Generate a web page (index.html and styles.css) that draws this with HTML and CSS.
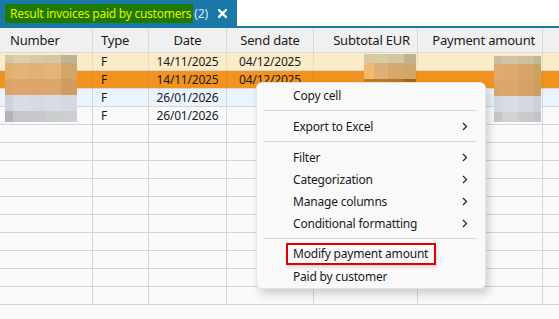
FILE: index.html
```html
<!DOCTYPE html>
<html>
<head>
<meta charset="utf-8">
<link rel="stylesheet" href="styles.css">
</head>
<body>
<div class="tabbar">
  <div class="tab">
    <span class="tab-title">Result invoices paid by customers</span>
    <span class="tab-count">(2)</span>
    <svg class="tab-close" width="9" height="9" viewBox="0 0 9 9"><path d="M1 1L8 8M8 1L1 8" stroke="#fff" stroke-width="2.4" stroke-linecap="square"/></svg>
  </div>
</div>
<div class="grid-wrap">
  <div class="grid">
    <div class="row head">
      <div class="c c1">Number</div><div class="c c2">Type</div><div class="c c3 center">Date</div><div class="c c4 center">Send date</div><div class="c c5 right">Subtotal EUR</div><div class="c c6 right">Payment amount</div><div class="c c7"></div>
    </div>
    <div class="row r-yellow">
      <div class="c c1"></div><div class="c c2">F</div><div class="c c3 center">14/11/2025</div><div class="c c4 center">04/12/2025</div><div class="c c5"></div><div class="c c6"></div><div class="c c7"></div>
    </div>
    <div class="row r-orange">
      <div class="c c1"></div><div class="c c2">F</div><div class="c c3 center">14/11/2025</div><div class="c c4 center">04/12/2025</div><div class="c c5"></div><div class="c c6"></div><div class="c c7"></div>
    </div>
    <div class="row r-blue">
      <div class="c c1"></div><div class="c c2">F</div><div class="c c3 center">26/01/2026</div><div class="c c4"></div><div class="c c5"></div><div class="c c6"></div><div class="c c7"></div>
    </div>
    <div class="row">
      <div class="c c1"></div><div class="c c2">F</div><div class="c c3 center">26/01/2026</div><div class="c c4"></div><div class="c c5"></div><div class="c c6"></div><div class="c c7"></div>
    </div>
    <div class="row"><div class="c c1"></div><div class="c c2"></div><div class="c c3"></div><div class="c c4"></div><div class="c c5"></div><div class="c c6"></div><div class="c c7"></div></div>
    <div class="row"><div class="c c1"></div><div class="c c2"></div><div class="c c3"></div><div class="c c4"></div><div class="c c5"></div><div class="c c6"></div><div class="c c7"></div></div>
    <div class="row"><div class="c c1"></div><div class="c c2"></div><div class="c c3"></div><div class="c c4"></div><div class="c c5"></div><div class="c c6"></div><div class="c c7"></div></div>
    <div class="row"><div class="c c1"></div><div class="c c2"></div><div class="c c3"></div><div class="c c4"></div><div class="c c5"></div><div class="c c6"></div><div class="c c7"></div></div>
    <div class="row"><div class="c c1"></div><div class="c c2"></div><div class="c c3"></div><div class="c c4"></div><div class="c c5"></div><div class="c c6"></div><div class="c c7"></div></div>
    <div class="row"><div class="c c1"></div><div class="c c2"></div><div class="c c3"></div><div class="c c4"></div><div class="c c5"></div><div class="c c6"></div><div class="c c7"></div></div>
    <div class="row"><div class="c c1"></div><div class="c c2"></div><div class="c c3"></div><div class="c c4"></div><div class="c c5"></div><div class="c c6"></div><div class="c c7"></div></div>
    <div class="row"><div class="c c1"></div><div class="c c2"></div><div class="c c3"></div><div class="c c4"></div><div class="c c5"></div><div class="c c6"></div><div class="c c7"></div></div>
    <div class="row"><div class="c c1"></div><div class="c c2"></div><div class="c c3"></div><div class="c c4"></div><div class="c c5"></div><div class="c c6"></div><div class="c c7"></div></div>
    <div class="row"><div class="c c1"></div><div class="c c2"></div><div class="c c3"></div><div class="c c4"></div><div class="c c5"></div><div class="c c6"></div><div class="c c7"></div></div>
  </div>

  <div class="mosaic mz-num">
    <span></span><span></span><span></span><span></span><span></span>
    <span></span><span></span><span></span><span></span><span></span>
    <span></span><span></span><span></span><span></span><span></span>
    <span></span><span></span><span></span><span></span><span></span>
    <span></span><span></span><span></span><span></span><span></span>
  </div>
  <div class="mosaic mz-sub">
    <span></span><span></span><span></span><span></span>
    <span></span><span></span><span></span><span></span>
    <span></span><span></span><span></span><span></span>
  </div>
  <div class="mosaic mz-pay">
    <span></span><span></span><span></span><span></span>
    <span></span><span></span><span></span><span></span>
    <span></span><span></span><span></span><span></span>
    <span></span><span></span><span></span><span></span>
    <span></span><span></span><span></span><span></span>
  </div>

  <div class="menu">
    <div class="item">Copy cell</div>
    <div class="sep"></div>
    <div class="item sub">Export to Excel<svg class="chev" width="6" height="9" viewBox="0 0 6 9"><path d="M1 1l3.5 3.5L1 8" fill="none" stroke="#222" stroke-width="1.2"/></svg></div>
    <div class="sep"></div>
    <div class="item sub">Filter<svg class="chev" width="6" height="9" viewBox="0 0 6 9"><path d="M1 1l3.5 3.5L1 8" fill="none" stroke="#222" stroke-width="1.2"/></svg></div>
    <div class="item sub">Categorization<svg class="chev" width="6" height="9" viewBox="0 0 6 9"><path d="M1 1l3.5 3.5L1 8" fill="none" stroke="#222" stroke-width="1.2"/></svg></div>
    <div class="item sub">Manage columns<svg class="chev" width="6" height="9" viewBox="0 0 6 9"><path d="M1 1l3.5 3.5L1 8" fill="none" stroke="#222" stroke-width="1.2"/></svg></div>
    <div class="item sub">Conditional formatting<svg class="chev" width="6" height="9" viewBox="0 0 6 9"><path d="M1 1l3.5 3.5L1 8" fill="none" stroke="#222" stroke-width="1.2"/></svg></div>
    <div class="sep"></div>
    <div class="item"><span class="highlight">Modify payment amount</span></div>
    <div class="item">Paid by customer</div>
  </div>
</div>
</body>
</html>
```

FILE: styles.css
```css
* { box-sizing: border-box; }
html, body {
  margin: 0;
  padding: 0;
  width: 559px;
  height: 319px;
  overflow: hidden;
  background: #f9fafb;
  font-family: "Noto Sans", "Open Sans", sans-serif;
  color: #1a1a1a;
}
.tabbar {
  height: 28px;
  background: #ffffff;
  border-bottom: 2px solid #1a78a8;
  display: flex;
}
.tab {
  width: 237px;
  height: 26px;
  background: #1a78a8;
  display: flex;
  align-items: center;
  padding-left: 5px;
}
.tab-title {
  background: #1e7b00;
  color: #e4f000;
  font-size: 12px;
  height: 19px;
  line-height: 19px;
  padding: 0 2px 0 5px;
  white-space: nowrap;
  letter-spacing: -0.25px;
}
.tab-count {
  color: #dbe8f5;
  font-size: 12px;
  margin-left: 1px;
  letter-spacing: -0.2px;
}
.tab-close {
  margin-left: 10px;
}
.grid-wrap {
  position: relative;
}
.grid {
  display: flex;
  flex-direction: column;
}
.row {
  display: flex;
  height: 18px;
  background: #f9fafb;
}
.c {
  height: 100%;
  border-right: 1px solid #d6d6d6;
  border-bottom: 1px solid #d6d6d6;
  font-size: 12px;
  line-height: 17px;
  white-space: nowrap;
  overflow: hidden;
  letter-spacing: -0.2px;
}
.c1 { width: 93px; padding-left: 10px; }
.c2 { width: 56px; padding-left: 8px; }
.c3 { width: 78px; }
.c4 { width: 87px; }
.c5 { width: 104px; padding-right: 7px; }
.c6 { width: 125px; padding-right: 7px; }
.c7 { flex: 1; border-right: none; }
.center { text-align: center; }
.right { text-align: right; }
.row.head {
  height: 25px;
  background: #f0f0f0;
}
.row.head .c {
  font-size: 13px;
  line-height: 24px;
  color: #1a1a1a;
  border-color: #dadada;
}
.r-yellow { background: #fbecc9; }
.r-yellow .c { border-right-color: #e6dcc4; }
.r-orange { background: #f3931f; }
.r-orange .c { border-right-color: #e08a20; }
.r-blue { background: #eaf4fe; }

.mosaic {
  position: absolute;
  display: grid;
}
.mosaic span { display: block; }
.mz-num {
  left: 5px;
  top: 27px;
  grid-template-columns: 8px 16px 16px 16px 16px;
  grid-template-rows: 8px 16px 16px 16px 11px;
}
.mz-num span:nth-child(1) { background: #d4c6a8; }
.mz-num span:nth-child(2) { background: #dccfae; }
.mz-num span:nth-child(3) { background: #d8c9a8; }
.mz-num span:nth-child(4) { background: #d3c5a6; }
.mz-num span:nth-child(5) { background: #bcb49a; }
.mz-num span:nth-child(6) { background: #e1b06f; }
.mz-num span:nth-child(7) { background: #e2b476; }
.mz-num span:nth-child(8) { background: #e2b274; }
.mz-num span:nth-child(9) { background: #e3b578; }
.mz-num span:nth-child(10) { background: #d0a66b; }
.mz-num span:nth-child(11) { background: #dba468; }
.mz-num span:nth-child(12) { background: #dea66a; }
.mz-num span:nth-child(13) { background: #dca56a; }
.mz-num span:nth-child(14) { background: #dda76b; }
.mz-num span:nth-child(15) { background: #cf9d62; }
.mz-num span:nth-child(16) { background: #ced2da; }
.mz-num span:nth-child(17) { background: #d8dce4; }
.mz-num span:nth-child(18) { background: #d6dae2; }
.mz-num span:nth-child(19) { background: #d8dce3; }
.mz-num span:nth-child(20) { background: #d4d8e0; }
.mz-num span:nth-child(21) { background: #b5b3b8; }
.mz-num span:nth-child(22) { background: #c8c6cb; }
.mz-num span:nth-child(23) { background: #c9c7cc; }
.mz-num span:nth-child(24) { background: #c9cfcf; }
.mz-num span:nth-child(25) { background: #cfcdd2; }

.mz-sub {
  left: 364px;
  top: 26px;
  grid-template-columns: 10px 14px 16px 12px;
  grid-template-rows: 9px 16px 16px;
}
.mz-sub span:nth-child(1) { background: #dcc8a4; }
.mz-sub span:nth-child(2) { background: #d6cca6; }
.mz-sub span:nth-child(3) { background: #d3c7a3; }
.mz-sub span:nth-child(4) { background: #bcb394; }
.mz-sub span:nth-child(5) { background: #f0b870; }
.mz-sub span:nth-child(6) { background: #dcb078; }
.mz-sub span:nth-child(7) { background: #d4a86e; }
.mz-sub span:nth-child(8) { background: #d0a86c; }
.mz-sub span:nth-child(9) { background: #c87a22; }
.mz-sub span:nth-child(10) { background: #c47820; }
.mz-sub span:nth-child(11) { background: #c07420; }
.mz-sub span:nth-child(12) { background: #a86414; }

.mz-pay {
  left: 494px;
  top: 28px;
  grid-template-columns: 8px 16px 16px 7px;
  grid-template-rows: 8px 16px 16px 16px 10px;
}
.mz-pay span:nth-child(1) { background: #c8bca0; }
.mz-pay span:nth-child(2) { background: #d0c4a4; }
.mz-pay span:nth-child(3) { background: #ccc0a0; }
.mz-pay span:nth-child(4) { background: #c0b898; }
.mz-pay span:nth-child(5) { background: #ddab6d; }
.mz-pay span:nth-child(6) { background: #dcaa6c; }
.mz-pay span:nth-child(7) { background: #d6a468; }
.mz-pay span:nth-child(8) { background: #cca060; }
.mz-pay span:nth-child(9) { background: #d9a66a; }
.mz-pay span:nth-child(10) { background: #dba86b; }
.mz-pay span:nth-child(11) { background: #d5a367; }
.mz-pay span:nth-child(12) { background: #caa062; }
.mz-pay span:nth-child(13) { background: #d4d8e0; }
.mz-pay span:nth-child(14) { background: #d8dce4; }
.mz-pay span:nth-child(15) { background: #d4d8e0; }
.mz-pay span:nth-child(16) { background: #ccd0d8; }
.mz-pay span:nth-child(17) { background: #c8c4c8; }
.mz-pay span:nth-child(18) { background: #d4d0d4; }
.mz-pay span:nth-child(19) { background: #ccc8cc; }
.mz-pay span:nth-child(20) { background: #c0c4cc; }

.menu {
  position: absolute;
  left: 256px;
  top: 54px;
  width: 230px;
  background: #f9f9f9;
  border: 1px solid #e4e4e4;
  border-radius: 6px;
  box-shadow: 3px 5px 10px rgba(0, 0, 0, 0.18);
  padding: 1px 0 1px 0;
}
.item {
  height: 22px;
  display: flex;
  align-items: center;
  padding-left: 36px;
  padding-right: 17px;
  font-size: 12px;
  color: #1a1a1a;
  white-space: nowrap;
  letter-spacing: -0.2px;
}
.item.sub { justify-content: space-between; }
.chev { flex: none; }
.sep {
  height: 1px;
  background: #d8d8d8;
  margin: 4px 8px 4px 7px;
}
.highlight {
  display: inline-block;
  height: 22px;
  line-height: 18px;
  margin-left: -7px;
  padding: 0 6px 0 5px;
  border: 2px solid #e00000;
  box-shadow: 1px 2px 3px rgba(0, 0, 0, 0.15);
}
```
